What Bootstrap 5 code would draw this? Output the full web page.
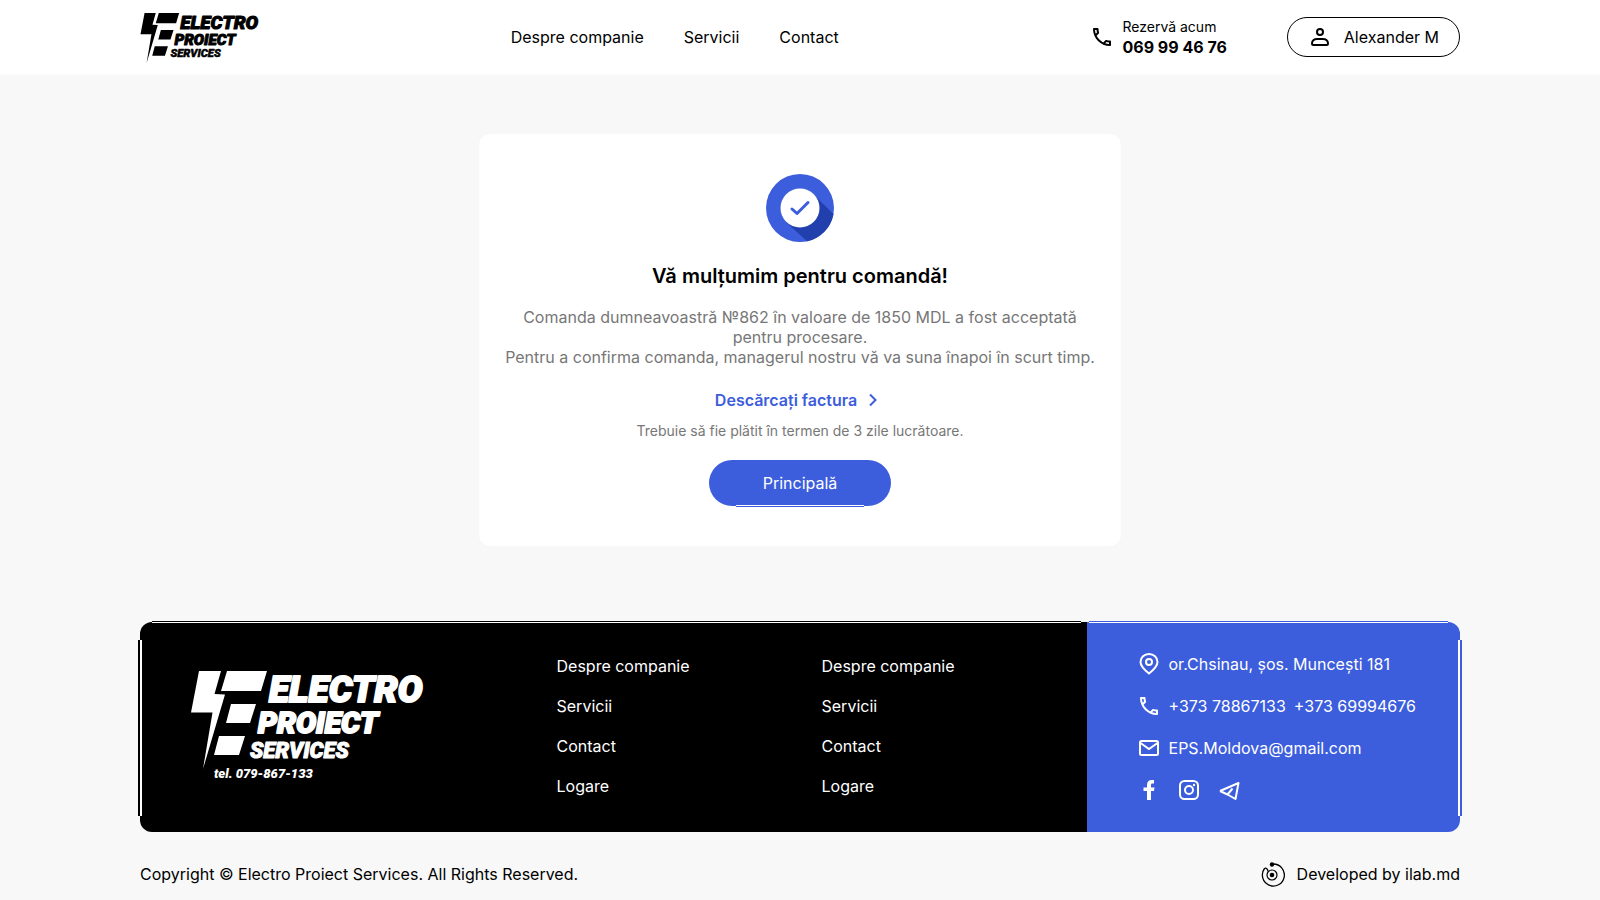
<!DOCTYPE html>
<html lang="ro">
<head>
<meta charset="utf-8">
<meta name="viewport" content="width=device-width, initial-scale=1">
<title>Electro Proiect Services</title>
<link href="https://cdn.jsdelivr.net/npm/bootstrap@5.3.0/dist/css/bootstrap.min.css" rel="stylesheet">
<style>
  :root { --brand: #3c5ddc; }
  body { background: #f8f8f8; color: #000; font-family: Inter, "Liberation Sans", sans-serif; font-size: 16px; line-height: 20px; }
  a { color: inherit; text-decoration: none; }
  svg { display: block; flex: none; }
  .site-header { min-height: 74px; padding-bottom: 1px; box-shadow: 0 1px 1px #fbfbfb; }
  .logo-type { font-family: Roboto, "Liberation Sans", sans-serif; font-weight: 900; font-style: italic; stroke: currentColor; stroke-linejoin: round; }
  .main-nav { gap: 40px; }
  .header-side { gap: 60px; }
  .text-14 { font-size: 14px; }
  .btn-user { --bs-btn-color: #000; --bs-btn-border-color: #000; --bs-btn-hover-bg: #f7f7f7; height: 40px; padding: 0 20px; gap: 12px; font-size: 16px; line-height: 20px; }
  .order-box { max-width: 642px; margin: 60px auto 76px; padding: 40px 24px; border-radius: 12px; }
  .order-title { font-size: 20px; line-height: 24px; font-weight: 600; margin: 22px 0 19px; }
  .order-link { margin-top: 23px; }
  .order-note { margin: 11px 0 19px; }
  .text-soft { color: #777; }
  .text-brand { color: var(--brand); }
  .btn-main { --bs-btn-color: #fff; --bs-btn-bg: var(--brand); --bs-btn-hover-bg: #2f4ec6; --bs-btn-hover-color: #fff; position: relative; border: 0; padding: 13px 54px; font-size: 16px; line-height: 20px; }
  .btn-main::after { content: ""; position: absolute; left: 27px; right: 27px; bottom: -1px; height: 2px; border-top: 1px solid #fff; background: var(--brand); }
  .foot-dark { background: #000; border-radius: 12px 0 0 12px; padding-left: 50px; }
  .foot-blue { background: var(--brand); border-radius: 0 12px 12px 0; padding: 30px 44px 30px 50px; gap: 18px; position: relative; }
  .foot-col { width: 265px; padding: 34px 0 36px; gap: 20px; }
  .edge-top, .edge-side { position: absolute; }
  .edge-top { top: -1px; height: 2px; border-bottom: 1px solid #fff; left: 12px; right: 6px; background: #000; }
  .foot-blue .edge-top { background: var(--brand); left: 2px; right: 12px; }
  .edge-side { top: 18px; bottom: 16px; width: 4px; background: #000; }
  .foot-dark .edge-side { left: -2px; border-right: 2px solid #fff; }
  .foot-blue .edge-side { right: -2px; border-left: 2px solid #fff; background: var(--brand); }
  .foot-bottom { padding: 29px 0 14px; }
  .dev-link { gap: 12px; }
</style>
</head>
<body>
<header class="site-header bg-white d-flex align-items-center">
  <div class="container px-0 d-flex align-items-center justify-content-between">
    <a href="#" aria-label="Electro Proiect Services">
      <svg width="119" height="52" viewBox="0 -4 234 102" fill="currentColor">
        <path d="M9 0H31L24.500 23 35 23.500 13 98 22.500 41.500H1zM37 0H77L71 20H31zM41 33H66L60 52H36zM29 65H55L49 84H24z"/>
        <g class="logo-type">
          <text x="79" y="31" font-size="37" stroke-width="2">ELECTRO</text>
          <text x="68" y="62" font-size="30" stroke-width="2">PROIECT</text>
          <text x="60" y="87" font-size="22" stroke-width="1">SERVICES</text>
        </g>
      </svg>
    </a>
    <nav class="main-nav d-flex">
      <a href="#">Despre companie</a>
      <a href="#">Servicii</a>
      <a href="#">Contact</a>
    </nav>
    <div class="header-side d-flex align-items-center">
      <a href="tel:069994676" class="d-flex align-items-center gap-2">
        <svg width="24" height="24" viewBox="0 0 24 24" fill="currentColor"><path d="M6.540 5c.06.890.210 1.760.450 2.590l-1.200 1.200c-.410-1.200-.670-2.470-.760-3.790h1.510m9.860 12.020c.850.240 1.720.390 2.600.450v1.490c-1.320-.090-2.590-.350-3.800-.750l1.200-1.190M7.500 3H4c-.550 0-1 .450-1 1 0 9.390 7.610 17 17 17 .550 0 1-.450 1-1v-3.490c0-.550-.450-1-1-1-1.240 0-2.450-.200-3.570-.570-.350-.110-.740-.030-1.020.240l-2.200 2.200c-2.830-1.450-5.150-3.760-6.590-6.590l2.200-2.200c.280-.280.360-.670.250-1.020C8.700 6.450 8.500 5.250 8.500 4c0-.550-.450-1-1-1z"/></svg>
        <span><span class="d-block text-14">Rezervă acum</span><span class="d-block fw-bold">069 99 46 76</span></span>
      </a>
      <button type="button" class="btn btn-user rounded-pill d-flex align-items-center">
        <svg width="24" height="24" viewBox="0 0 24 24" fill="none" stroke="currentColor" stroke-width="2"><circle cx="12" cy="7" r="3"/><path d="M4 18.500C4 15.500 6.500 14 9 14h6c2.500 0 5 1.500 5 4.500 0 1-.700 1.500-1.500 1.500h-13C4.700 20 4 19.500 4 18.500z"/></svg>
        Alexander M
      </button>
    </div>
  </div>
</header>

<main class="container px-0">
  <section class="order-box bg-white d-flex flex-column align-items-center text-center">
    <svg width="68" height="68" viewBox="0 0 68 68"><circle cx="34" cy="34" r="34" fill="#3c5ddc"/><path d="M47.500 20.500 67.500 40A34 34 0 0 1 41 67.300L20 48z" fill="#213fad"/><circle cx="34" cy="34" r="19.500" fill="#fff"/><path d="M26 35 31 39.500 42 28.500" fill="none" stroke="#3c5ddc" stroke-width="3" stroke-linecap="round" stroke-linejoin="round"/></svg>
    <h1 class="order-title">Vă mulțumim pentru comandă!</h1>
    <p class="text-soft mb-0">Comanda dumneavoastră №862 în valoare de 1850 MDL a fost acceptată<br>pentru procesare.<br>Pentru a confirma comanda, managerul nostru vă va suna înapoi în scurt timp.</p>
    <a href="#" class="order-link text-brand fw-semibold d-flex align-items-center gap-2">Descărcați factura
      <svg width="20" height="20" viewBox="0 0 20 20" fill="none" stroke="currentColor" stroke-width="2"><path d="m5 4.500 5.500 5.500L5 15.500"/></svg>
    </a>
    <p class="order-note text-soft text-14">Trebuie să fie plătit în termen de 3 zile lucrătoare.</p>
    <a href="#" class="btn btn-main rounded-pill">Principală</a>
  </section>
</main>

<footer class="container px-0">
  <div class="d-flex text-white">
    <div class="foot-dark flex-grow-1 d-flex justify-content-between align-items-center position-relative">
      <span class="edge-top"></span><span class="edge-side"></span>
      <a href="#" aria-label="Electro Proiect Services">
        <svg width="234" height="112" viewBox="0 0 234 112" fill="currentColor">
          <path d="M9 0H31L24.500 23 35 23.500 13 98 22.500 41.500H1zM37 0H77L71 20H31zM41 33H66L60 52H36zM29 65H55L49 84H24z"/>
          <g class="logo-type">
            <text x="79" y="31" font-size="37" stroke-width="2">ELECTRO</text>
            <text x="68" y="62" font-size="30" stroke-width="2">PROIECT</text>
            <text x="60" y="87" font-size="22" stroke-width="1">SERVICES</text>
            <text x="24" y="107" font-size="13" stroke="none">tel. 079-867-133</text>
          </g>
        </svg>
      </a>
      <div class="d-flex">
        <nav class="foot-col d-flex flex-column"><a href="#">Despre companie</a><a href="#">Servicii</a><a href="#">Contact</a><a href="#">Logare</a></nav>
        <nav class="foot-col d-flex flex-column"><a href="#">Despre companie</a><a href="#">Servicii</a><a href="#">Contact</a><a href="#">Logare</a></nav>
      </div>
    </div>
    <address class="foot-blue d-flex flex-column mb-0">
      <span class="edge-top"></span><span class="edge-side"></span>
      <div class="d-flex align-items-center gap-2">
        <svg width="24" height="24" viewBox="0 0 24 24" fill="none" stroke="currentColor" stroke-width="2"><path d="M12 21.500C7 17.500 3.500 14 3.500 10a8.500 8 0 0 1 17 0c0 4-3.500 7.500-8.500 11.500z"/><circle cx="12" cy="10" r="3"/></svg>
        or.Chsinau, șos. Muncești 181
      </div>
      <div class="d-flex align-items-center gap-2">
        <svg width="24" height="24" viewBox="0 0 24 24" fill="currentColor"><path d="M6.540 5c.06.890.210 1.760.450 2.590l-1.200 1.200c-.410-1.200-.670-2.470-.760-3.790h1.510m9.860 12.020c.850.240 1.720.390 2.600.450v1.490c-1.320-.090-2.590-.350-3.800-.750l1.200-1.190M7.500 3H4c-.550 0-1 .450-1 1 0 9.390 7.610 17 17 17 .550 0 1-.450 1-1v-3.490c0-.550-.450-1-1-1-1.240 0-2.450-.200-3.570-.570-.350-.110-.740-.030-1.020.240l-2.200 2.200c-2.830-1.450-5.150-3.760-6.590-6.590l2.200-2.200c.280-.280.360-.670.250-1.020C8.700 6.450 8.500 5.250 8.500 4c0-.550-.450-1-1-1z"/></svg>
        <a href="tel:+37378867133">+373 78867133</a><a href="tel:+37369994676">+373 69994676</a>
      </div>
      <div class="d-flex align-items-center gap-2">
        <svg width="24" height="24" viewBox="0 0 24 24" fill="none" stroke="currentColor" stroke-width="2"><rect x="3" y="5" width="18" height="14" rx="1.500"/><path d="m3.500 7 8.500 6 8.500-6"/></svg>
        <a href="mailto:EPS.Moldova@gmail.com">EPS.Moldova@gmail.com</a>
      </div>
      <div class="d-flex gap-3">
        <a href="#" aria-label="Facebook"><svg width="24" height="24" viewBox="0 0 24 24" fill="currentColor"><path d="M10 22v-9H6.500V9.500H10V7c0-3.200 1.900-5 4.600-5H17v3.500h-1.400c-1.200 0-1.600.600-1.600 1.600v2.400h3.500L17 13h-3v9z"/></svg></a>
        <a href="#" aria-label="Instagram"><svg width="24" height="24" viewBox="0 0 24 24" fill="none" stroke="currentColor" stroke-width="2"><rect x="3" y="3" width="18" height="18" rx="4.500"/><circle cx="12" cy="12" r="4"/><circle cx="17" cy="7" r="1.200" fill="currentColor" stroke="none"/></svg></a>
        <a href="#" aria-label="Telegram"><svg width="24" height="24" viewBox="0 0 24 24" fill="none" stroke="currentColor" stroke-width="2" stroke-linejoin="round"><path d="M3 13 21.500 5 18.500 21 10.500 16.500 15.500 10.500M3 13l7.500 3.500"/></svg></a>
      </div>
    </address>
  </div>
  <div class="foot-bottom d-flex justify-content-between align-items-center">
    <span>Copyright © Electro Proiect Services. All Rights Reserved.</span>
    <a href="#" class="dev-link d-flex align-items-center">
      <svg width="26" height="26" viewBox="0 0 26 26" fill="none" stroke="currentColor"><path d="M14 3a11 11 0 1 1-8.500 4.500C7 6.500 9 8 9 10.500" stroke-width="1.300"/><circle cx="13" cy="14" r="5" stroke-width="1.200"/><circle cx="13" cy="14" r="2.300" fill="currentColor" stroke="none"/><circle cx="13" cy="3.500" r="2.200" fill="currentColor" stroke="none"/></svg>
      Developed by ilab.md
    </a>
  </div>
</footer>
<script src="https://cdn.jsdelivr.net/npm/bootstrap@5.3.0/dist/js/bootstrap.bundle.min.js"></script>
</body>
</html>
